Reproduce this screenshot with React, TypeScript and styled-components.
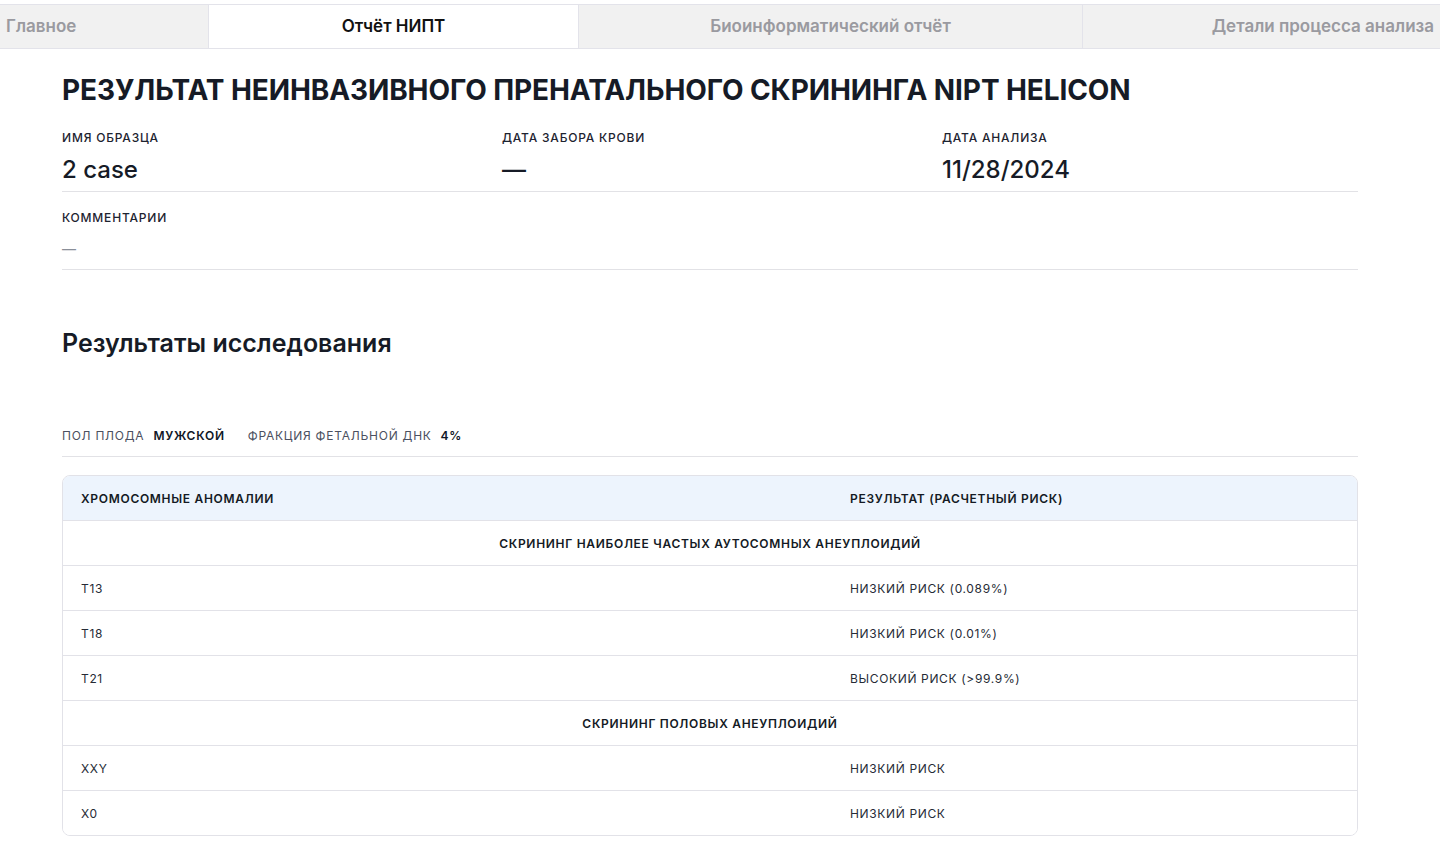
import React from "react";
import styled, { createGlobalStyle } from "styled-components";

const Global = createGlobalStyle`
  * { box-sizing: border-box; }
  html, body { margin: 0; padding: 0; background: #ffffff; }
  body { font-family: Inter, "Noto Sans", "Liberation Sans", sans-serif; color: #111827; }
`;

const Page = styled.div`
  padding-top: 4px;
  width: 1440px;
  overflow: hidden;
`;

const TabBar = styled.nav`
  display: flex;
  height: 45px;
  background: #f1f1f1;
  border-top: 1px solid #e3e3ea;
  border-bottom: 1px solid #e3e3ea;
`;

const Tab = styled.div<{ $w: number; $active?: boolean; $align: "left" | "center" | "right" }>`
  flex: 0 0 ${(p) => p.$w}px;
  display: flex;
  align-items: center;
  justify-content: ${(p) => (p.$align === "left" ? "flex-start" : p.$align === "right" ? "flex-end" : "center")};
  padding: 0 6px 1px;
  font-size: 17px;
  font-weight: 600;
  color: ${(p) => (p.$active ? "#111111" : "#9a9aa0")};
  background: ${(p) => (p.$active ? "#ffffff" : "transparent")};
  border-left: 1px solid #e3e3ea;
  &:first-child { border-left: none; }
  white-space: nowrap;
`;

const Content = styled.main`
  padding: 24px 82px 0 62px;
`;

const Title = styled.h1`
  margin: 0;
  font-size: 28px;
  line-height: 34px;
  font-weight: 700;
  color: #161b26;
  letter-spacing: -0.1px;
`;

const InfoRow = styled.div<{ $cols: number; $pt: number; $pb: number }>`
  display: grid;
  grid-template-columns: ${(p) => (p.$cols === 3 ? "416px 416px 416px" : "1fr")};
  column-gap: 24px;
  padding-top: ${(p) => p.$pt}px;
  padding-bottom: ${(p) => p.$pb}px;
  border-bottom: 1px solid #e2e2e6;
`;

const Field = styled.div`
  display: flex;
  flex-direction: column;
`;

const Label = styled.div`
  font-size: 12px;
  line-height: 16px;
  font-weight: 500;
  letter-spacing: 0.8px;
  text-transform: uppercase;
  color: #1d2330;
`;

const Value = styled.div<{ $small?: boolean }>`
  margin-top: ${(p) => (p.$small ? 13 : 9)}px;
  font-size: ${(p) => (p.$small ? 14 : 24)}px;
  line-height: ${(p) => (p.$small ? 20 : 30)}px;
  font-weight: 500;
  color: ${(p) => (p.$small ? "#8a8f99" : "#161b26")};
`;

const SectionTitle = styled.h2`
  margin: 57px 0 0;
  font-size: 25px;
  line-height: 32px;
  font-weight: 600;
  color: #161b26;
`;

const Stats = styled.div`
  margin-top: 69px;
  display: flex;
  align-items: center;
  gap: 23px;
  padding-bottom: 12px;
  border-bottom: 1px solid #e2e2e6;
`;

const Stat = styled.div`
  display: flex;
  align-items: center;
  gap: 9px;
  font-size: 12px;
  line-height: 16px;
  letter-spacing: 0.75px;
  text-transform: uppercase;
`;

const StatLabel = styled.span`
  color: #4b5060;
  font-weight: 400;
`;

const StatValue = styled.span`
  color: #111827;
  font-weight: 600;
`;

const Table = styled.div`
  margin-top: 18px;
  border: 1px solid #e2e2e8;
  border-radius: 8px;
  overflow: hidden;
`;

const Row = styled.div<{ $head?: boolean }>`
  display: grid;
  grid-template-columns: 769px 1fr;
  height: ${(p) => (p.$head ? 44 : 45)}px;
  background: ${(p) => (p.$head ? "#edf4fd" : "#ffffff")};
  border-top: ${(p) => (p.$head ? "none" : "1px solid #e2e2e8")};
`;

const Cell = styled.div<{ $bold?: boolean }>`
  display: flex;
  align-items: center;
  padding: 0 18px;
  font-size: 12px;
  letter-spacing: ${(p) => (p.$bold ? 0.7 : 0.65)}px;
  text-transform: uppercase;
  font-weight: ${(p) => (p.$bold ? 600 : 400)};
  color: ${(p) => (p.$bold ? "#141a24" : "#262b36")};
  white-space: nowrap;
`;

const GroupRow = styled.div`
  display: flex;
  align-items: center;
  justify-content: center;
  height: 45px;
  border-top: 1px solid #e2e2e8;
  font-size: 12px;
  letter-spacing: 0.7px;
  font-weight: 600;
  text-transform: uppercase;
  color: #141a24;
`;

type Item = { kind: "group"; title: string } | { kind: "row"; name: string; result: string };

const items: Item[] = [
  { kind: "group", title: "Скрининг наиболее частых аутосомных анеуплоидий" },
  { kind: "row", name: "T13", result: "Низкий риск (0.089%)" },
  { kind: "row", name: "T18", result: "Низкий риск (0.01%)" },
  { kind: "row", name: "T21", result: "Высокий риск (>99.9%)" },
  { kind: "group", title: "Скрининг половых анеуплоидий" },
  { kind: "row", name: "XXY", result: "Низкий риск" },
  { kind: "row", name: "X0", result: "Низкий риск" },
];

export default function App() {
  return (
    <Page>
      <Global />
      <TabBar>
        <Tab $w={208} $align="left">Главное</Tab>
        <Tab $w={370} $align="center" $active>Отчёт НИПТ</Tab>
        <Tab $w={504} $align="center">Биоинформатический отчёт</Tab>
        <Tab $w={358} $align="right">Детали процесса анализа</Tab>
      </TabBar>
      <Content>
        <Title>РЕЗУЛЬТАТ НЕИНВАЗИВНОГО ПРЕНАТАЛЬНОГО СКРИНИНГА NIPT HELICON</Title>
        <InfoRow $cols={3} $pt={23} $pb={6}>
          <Field>
            <Label>Имя образца</Label>
            <Value>2 case</Value>
          </Field>
          <Field>
            <Label>Дата забора крови</Label>
            <Value>—</Value>
          </Field>
          <Field>
            <Label>Дата анализа</Label>
            <Value>11/28/2024</Value>
          </Field>
        </InfoRow>
        <InfoRow $cols={1} $pt={18} $pb={10}>
          <Field>
            <Label>Комментарии</Label>
            <Value $small>—</Value>
          </Field>
        </InfoRow>
        <SectionTitle>Результаты исследования</SectionTitle>
        <Stats>
          <Stat>
            <StatLabel>Пол плода</StatLabel>
            <StatValue>Мужской</StatValue>
          </Stat>
          <Stat>
            <StatLabel>Фракция фетальной ДНК</StatLabel>
            <StatValue>4%</StatValue>
          </Stat>
        </Stats>
        <Table>
          <Row $head>
            <Cell $bold>Хромосомные аномалии</Cell>
            <Cell $bold>Результат (расчетный риск)</Cell>
          </Row>
          {items.map((it, i) =>
            it.kind === "group" ? (
              <GroupRow key={i}>{it.title}</GroupRow>
            ) : (
              <Row key={i}>
                <Cell>{it.name}</Cell>
                <Cell>{it.result}</Cell>
              </Row>
            )
          )}
        </Table>
      </Content>
    </Page>
  );
}
